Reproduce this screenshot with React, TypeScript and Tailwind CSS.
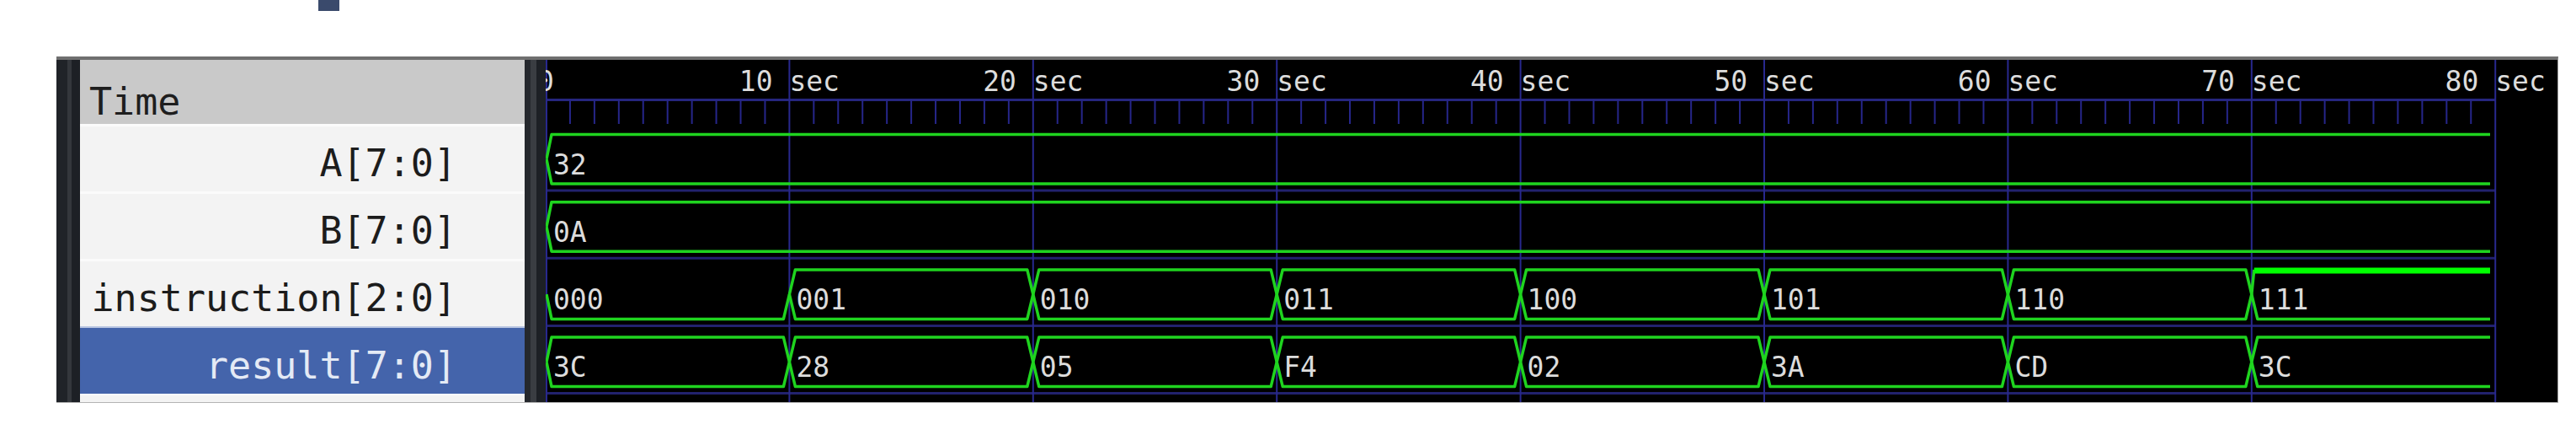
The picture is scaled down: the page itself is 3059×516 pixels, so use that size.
import React from "react";

const PX = 28.94;
const sx = (t: number) => (t === 0 ? 1 : t * PX);
const END = 2309;
const GREEN = "#1fd41f";

type Seg = { t0: number; t1: number; v: string; noTop?: boolean; thickTop?: boolean };

const rows: Seg[][] = [
  [{ t0: 0, t1: 80, v: "32" }],
  [{ t0: 0, t1: 80, v: "0A" }],
  [
    { t0: 0, t1: 10, v: "000", noTop: true },
    { t0: 10, t1: 20, v: "001" },
    { t0: 20, t1: 30, v: "010" },
    { t0: 30, t1: 40, v: "011" },
    { t0: 40, t1: 50, v: "100" },
    { t0: 50, t1: 60, v: "101" },
    { t0: 60, t1: 70, v: "110" },
    { t0: 70, t1: 80, v: "111", thickTop: true },
  ],
  [
    { t0: 0, t1: 10, v: "3C" },
    { t0: 10, t1: 20, v: "28" },
    { t0: 20, t1: 30, v: "05" },
    { t0: 30, t1: 40, v: "F4" },
    { t0: 40, t1: 50, v: "02" },
    { t0: 50, t1: 60, v: "3A" },
    { t0: 60, t1: 70, v: "CD" },
    { t0: 70, t1: 80, v: "3C" },
  ],
];

function Segment({ s, top, bot }: { s: Seg; top: number; bot: number }) {
  const mid = (top + bot) / 2;
  const x0 = sx(s.t0);
  const d0 = s.t0 === 0 ? 6 : 7;
  const closed = s.t1 < 80;
  const x1 = closed ? sx(s.t1) : END;
  const xe = closed ? x1 - 7 : x1;
  const topD = `M ${x0} ${mid} L ${x0 + d0} ${top} L ${xe} ${top}${closed ? ` L ${x1} ${mid}` : ""}`;
  const botD = `M ${x0} ${mid} L ${x0 + d0} ${bot} L ${xe} ${bot}${closed ? ` L ${x1} ${mid}` : ""}`;
  return (
    <g>
      {!s.noTop && !s.thickTop && (
        <path d={topD} stroke={GREEN} strokeWidth={3.5} fill="none" strokeLinejoin="round" />
      )}
      {s.thickTop && (
        <>
          <path d={`M ${x0} ${mid} L ${x0 + 3} ${top}`} stroke={GREEN} strokeWidth={3.5} fill="none" />
          <line x1={x0 + 3} y1={top + 1} x2={xe} y2={top + 1} stroke="#00ff00" strokeWidth={7} />
        </>
      )}
      <path d={botD} stroke={GREEN} strokeWidth={3.5} fill="none" strokeLinejoin="round" />
      <text
        x={x0 + 8}
        y={mid + 18}
        fill="#dcdcdc"
        fontSize={33}
        fontFamily="'DejaVu Sans Mono', monospace"
      >
        {s.v}
      </text>
    </g>
  );
}

function Waves() {
  const ticks: number[] = [];
  for (let t = 1; t < 80; t++) if (t % 10 !== 0) ticks.push(t);
  const majors = [0, 10, 20, 30, 40, 50, 60, 70, 80];
  return (
    <svg width={2389} height={406} viewBox="0 0 2389 406" className="block">
      <rect x={0} y={0} width={2389} height={406} fill="#000" />
      <line x1={0} y1={47.5} x2={sx(80)} y2={47.5} stroke="#26267e" strokeWidth={3} />
      {ticks.map((t) => (
        <line key={t} x1={sx(t)} y1={47} x2={sx(t)} y2={76} stroke="#26268a" strokeWidth={2} />
      ))}
      {[0, 1, 2, 3].map((i) => {
        const y = 88.5 + 80.2 * i + 66.5;
        return <line key={i} x1={0} y1={y} x2={sx(80)} y2={y} stroke="#22226e" strokeWidth={3} />;
      })}
      {majors.map((t) => (
        <line key={t} x1={sx(t)} y1={0} x2={sx(t)} y2={406} stroke="#28288e" strokeWidth={2} />
      ))}
      {majors.map((t) => (
        <text
          key={t}
          x={t === 0 ? 0 : sx(t)}
          y={37}
          fill="#dcdcdc"
          fontSize={33}
          textAnchor="middle"
          fontFamily="'DejaVu Sans Mono', monospace"
        >
          {t === 0 ? "0" : `${t} sec`}
        </text>
      ))}
      {rows.map((segs, i) => {
        const top = 88.5 + 80.2 * i;
        const bot = top + 58.5;
        return (
          <g key={i}>
            {segs.map((s, j) => (
              <Segment key={j} s={s} top={top} bot={bot} />
            ))}
          </g>
        );
      })}
    </svg>
  );
}

function Grip({ a, b, c }: { a: string; b: string; c: string }) {
  return (
    <div className="flex h-full">
      <div className={a} />
      <div className={b} />
      <div className={c} />
    </div>
  );
}

const labels = ["A[7:0]", "B[7:0]", "instruction[2:0]"];

export default function App() {
  return (
    <div className="w-[3059px] h-[516px] bg-white overflow-hidden font-['DejaVu_Sans_Mono',monospace]">
      <div className="ml-[378px] w-[25px] h-[13px] bg-[#3a4a6c]" />
      <div className="mt-[54px] ml-[67px] w-[2971px] h-[411px] flex border-t-[4px] border-t-[#6f6f6f] border-r border-r-[#a0a0a0] border-b border-b-[#b4b4b4]">
        <Grip
          a="w-[13px] h-full bg-[#202328]"
          b="w-[5px] h-full bg-[#34373c]"
          c="w-[10px] h-full bg-[#1d2025]"
        />
        <div className="w-[528px] h-full flex flex-col bg-[#f3f3f3]">
          <div className="h-[76px] shrink-0 bg-[#c9c9c9] pl-[11px] pt-[24px] text-[45px] leading-[52px] text-[#1e1e1e]">
            Time
          </div>
          {labels.map((l) => (
            <div
              key={l}
              className="h-[80px] shrink-0 border-t-[3px] border-t-[#fbfbfb] pt-[18px] pr-[81px] text-right text-[45px] leading-[52px] text-[#1c1c1c] whitespace-pre"
            >
              {l}
            </div>
          ))}
          <div className="h-[80px] shrink-0 border-t-[2px] border-t-[#b9c6e2] bg-[#4464ab] pt-[19px] pr-[81px] text-right text-[45px] leading-[52px] text-[#e4eaf5] whitespace-pre">
            result[7:0]
          </div>
          <div className="flex-1 border-t-[2px] border-t-[#fbfbfb]" />
        </div>
        <Grip
          a="w-[7px] h-full bg-[#25282d]"
          b="w-[7px] h-full bg-[#3a3d42]"
          c="w-[11px] h-full bg-[#1d2025]"
        />
        <div className="w-[2389px] h-full bg-black overflow-hidden">
          <Waves />
        </div>
      </div>
    </div>
  );
}
